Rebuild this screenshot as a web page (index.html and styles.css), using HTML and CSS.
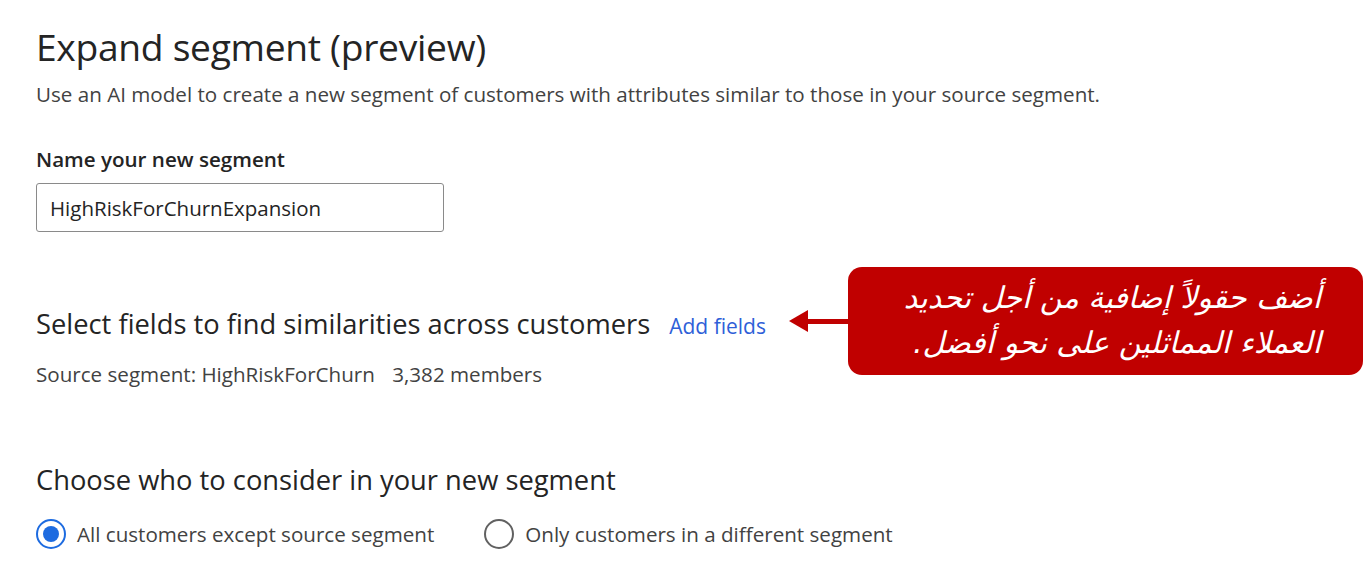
FILE: index.html
```html
<!DOCTYPE html>
<html lang="en">
<head>
<meta charset="utf-8">
<title>Expand segment (preview)</title>
<link rel="stylesheet" href="styles.css">
</head>
<body>
<main class="page">
  <h1 class="title">Expand segment (preview)</h1>
  <p class="subtitle">Use an AI model to create a new segment of customers with attributes similar to those in your source segment.</p>

  <label class="field-label" for="seg-name">Name your new segment</label>
  <div class="input-box"><span id="seg-name" class="input-text">HighRiskForChurnExpansion</span></div>

  <div class="section-row">
    <h2 class="section-title">Select fields to find similarities across customers</h2>
    <a class="link">Add fields</a>
  </div>
  <p class="source">Source segment: HighRiskForChurn <span class="members">3,382 members</span></p>

  <h2 class="section-title choose">Choose who to consider in your new segment</h2>
  <div class="radios">
    <div class="radio-item">
      <span class="radio checked"></span>
      <span class="radio-label">All customers except source segment</span>
    </div>
    <div class="radio-item">
      <span class="radio"></span>
      <span class="radio-label">Only customers in a different segment</span>
    </div>
  </div>

  <div class="callout">
    <div class="arrow"><span class="arrow-head"></span><span class="arrow-line"></span></div>
    <div class="callout-box" dir="rtl">أضف حقولاً إضافية من أجل تحديد<br>العملاء المماثلين على نحو أفضل.</div>
  </div>
</main>
</body>
</html>
```
FILE: styles.css
```css
html, body {
  margin: 0;
  padding: 0;
  background: #ffffff;
}
.page {
  position: relative;
  width: 1363px;
  height: 586px;
  padding-left: 36px;
  box-sizing: border-box;
  font-family: "Open Sans", "Noto Sans", sans-serif;
  color: #242424;
  display: flex;
  flex-direction: column;
  align-items: flex-start;
  overflow: hidden;
}
.title {
  margin: 22px 0 0 0;
  font-size: 37.2px;
  line-height: 50px;
  font-weight: 400;
  letter-spacing: -0.3px;
}
.subtitle {
  margin: 8px 0 0 0;
  font-size: 20.6px;
  line-height: 28px;
  color: #424242;
}
.field-label {
  margin-top: 37px;
  font-size: 20.6px;
  line-height: 28px;
  font-weight: 600;
  color: #242424;
}
.input-box {
  margin-top: 10px;
  width: 408px;
  height: 49px;
  box-sizing: border-box;
  border: 1px solid #8a8a8a;
  border-radius: 3px;
  display: flex;
  align-items: center;
  padding-left: 13px;
}
.input-text {
  font-size: 20.5px;
  color: #242424;
}
.section-row {
  margin-top: 73px;
  display: flex;
  align-items: baseline;
  gap: 19px;
}
.section-title {
  margin: 0;
  font-size: 27.3px;
  line-height: 38px;
  font-weight: 400;
  color: #242424;
}
.link {
  font-size: 21px;
  color: #2f5fd8;
}
.source {
  margin: 17px 0 0 0;
  font-size: 20.6px;
  line-height: 28px;
  color: #424242;
}
.members {
  margin-left: 12px;
}
.choose {
  margin-top: 73px;
}
.radios {
  margin-top: 20px;
  display: flex;
  gap: 50px;
}
.radio-item {
  display: flex;
  align-items: center;
  gap: 11px;
}
.radio {
  width: 30px;
  height: 30px;
  box-sizing: border-box;
  border-radius: 50%;
  border: 2px solid #616161;
  display: flex;
  align-items: center;
  justify-content: center;
}
.radio.checked {
  border-color: #1d6be0;
}
.radio.checked::after {
  content: "";
  width: 16px;
  height: 16px;
  border-radius: 50%;
  background: #1d6be0;
}
.radio-label {
  font-size: 20.6px;
  color: #424242;
}
.callout {
  position: absolute;
  left: 789px;
  top: 267px;
  display: flex;
  align-items: center;
}
.arrow {
  display: flex;
  align-items: center;
  width: 59px;
}
.arrow-head {
  width: 0;
  height: 0;
  border-top: 11px solid transparent;
  border-bottom: 11px solid transparent;
  border-right: 19px solid #c00000;
}
.arrow-line {
  flex: 1;
  height: 5px;
  background: #c00000;
}
.callout-box {
  width: 515px;
  height: 108px;
  box-sizing: border-box;
  background: #c00000;
  border-radius: 14px;
  color: #ffffff;
  font-family: "DejaVu Sans", sans-serif;
  font-style: italic;
  font-size: 30px;
  line-height: 45px;
  padding: 8px 42px 0 20px;
  text-align: right;
}
```
